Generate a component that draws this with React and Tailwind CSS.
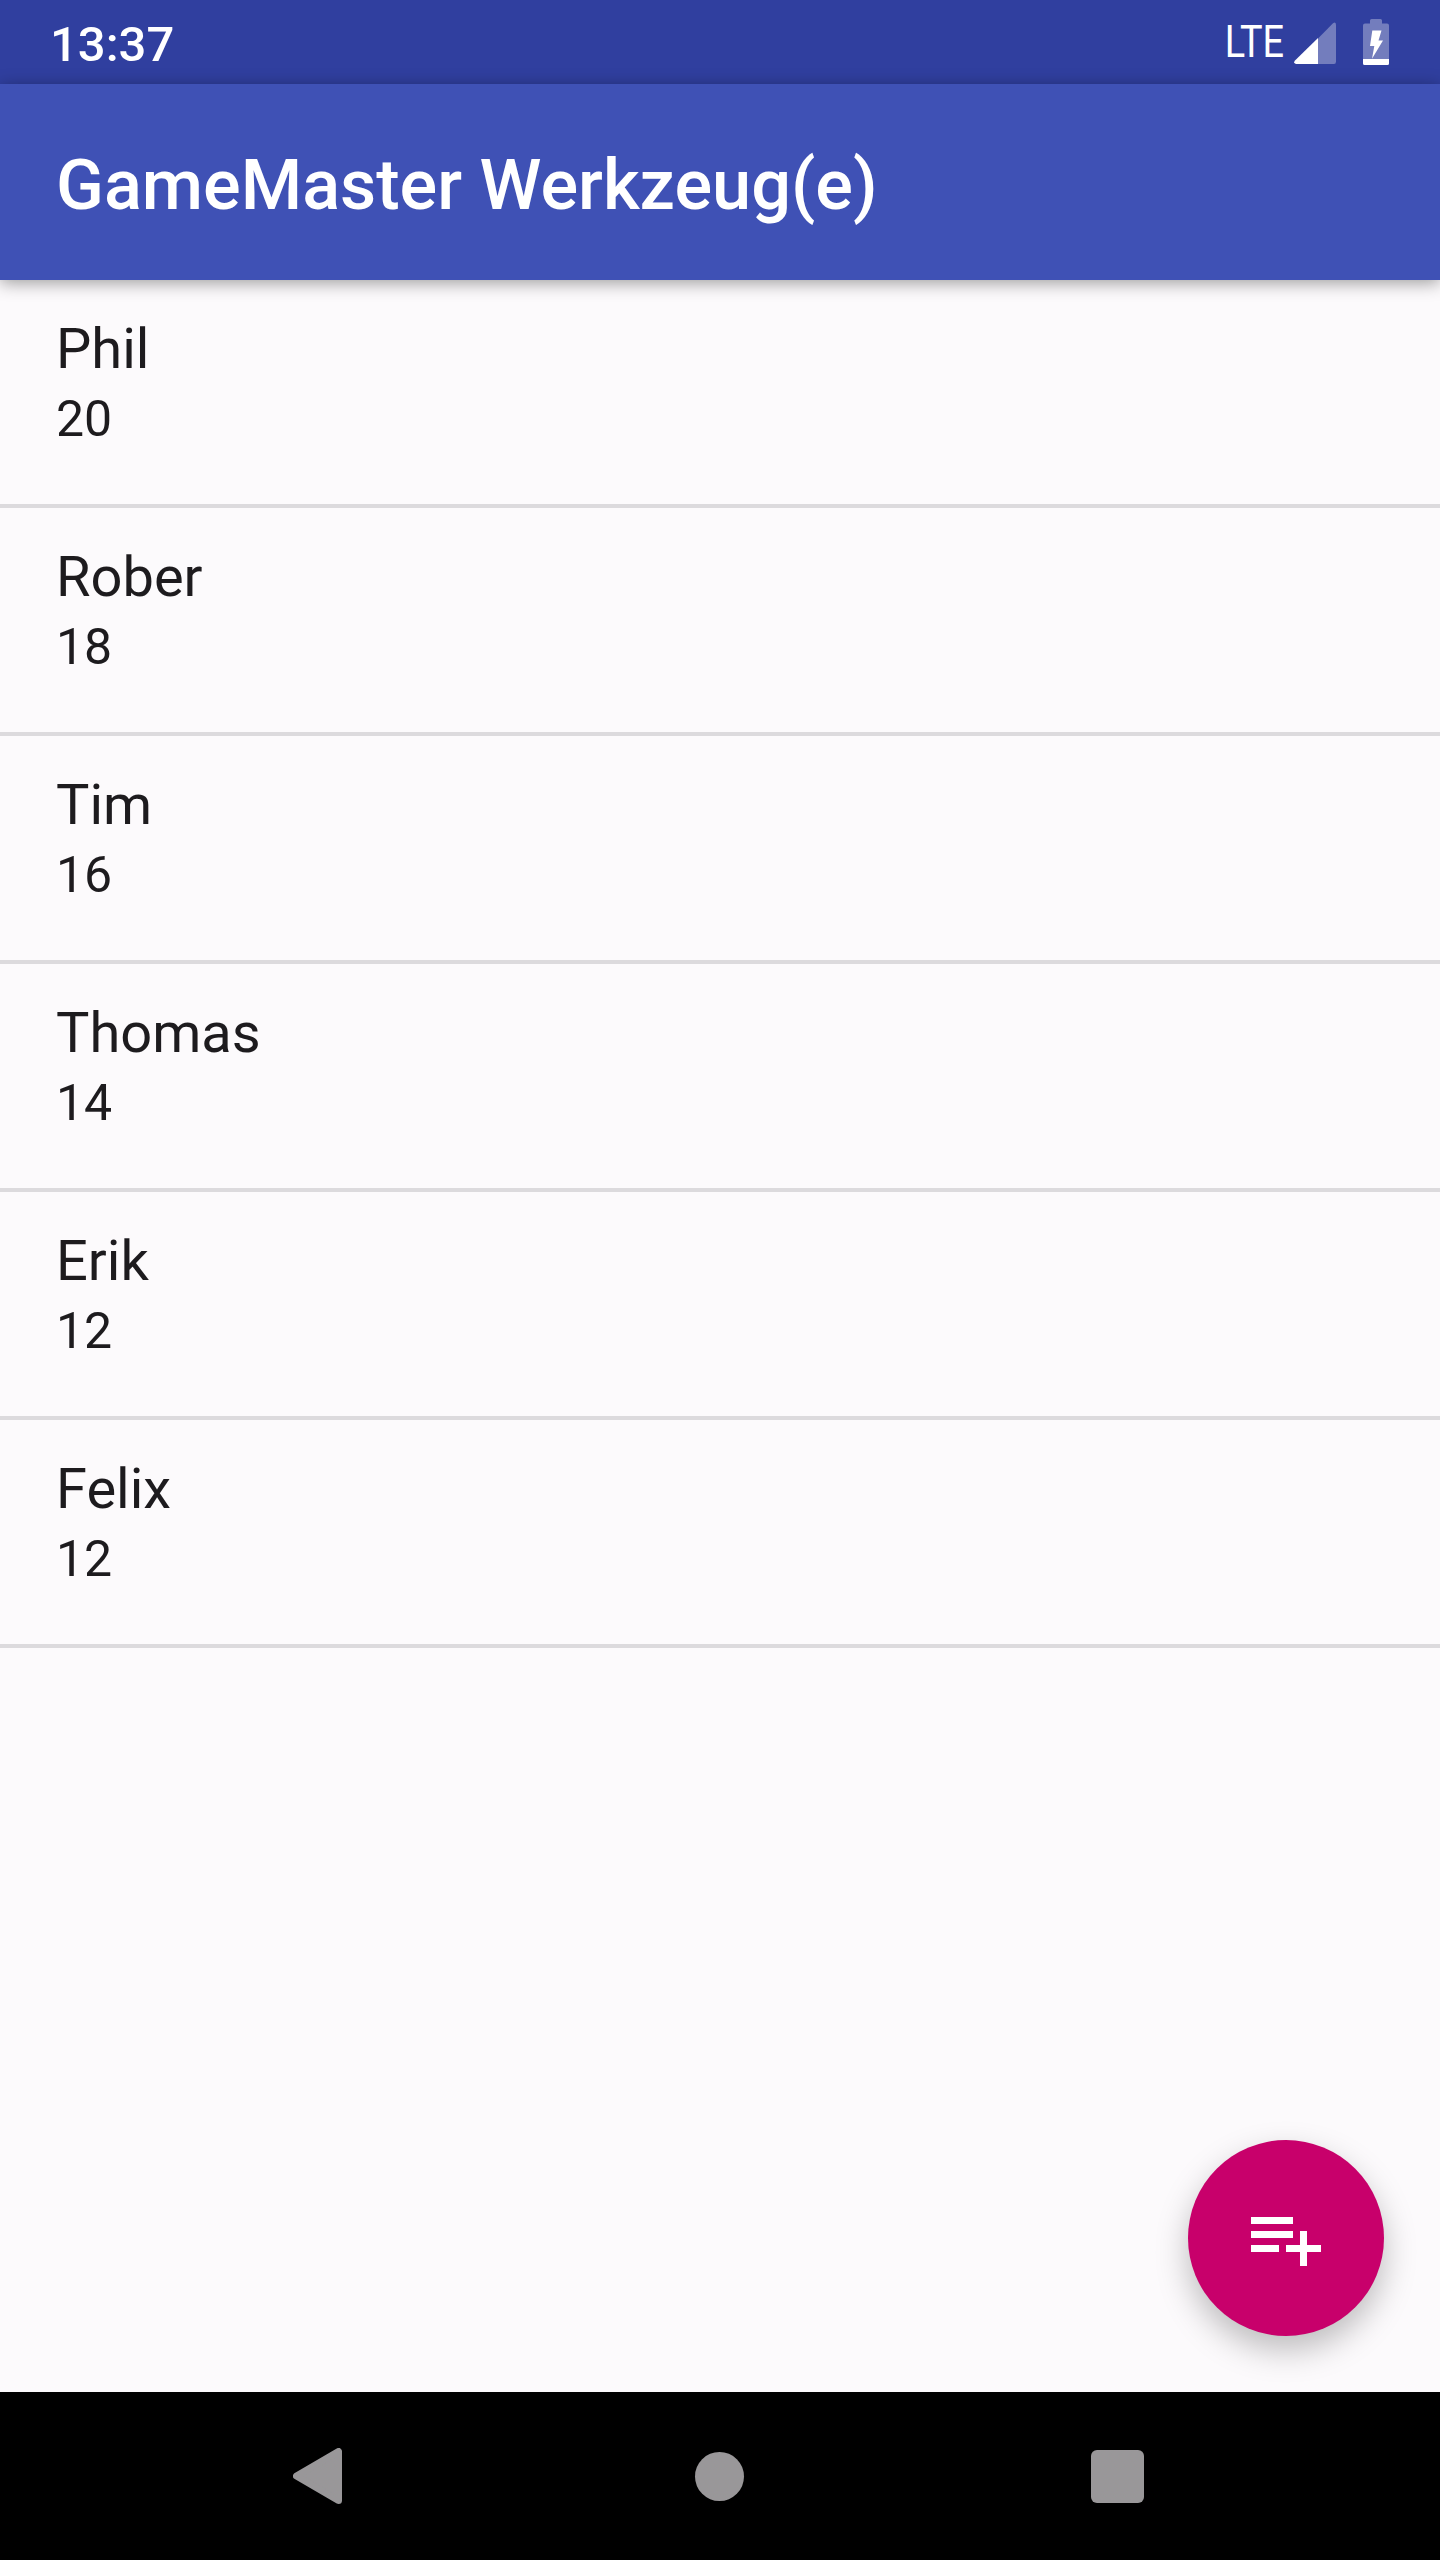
const people = [["Phil", "20"], ["Rober", "18"], ["Tim", "16"], ["Thomas", "14"], ["Erik", "12"], ["Felix", "12"]];

export default function App() {
  return (
    <div className="relative flex h-[2560px] w-[1440px] flex-col overflow-hidden bg-[#fcfafc] font-['Roboto',sans-serif]">
      <header className="flex h-[84px] shrink-0 items-center justify-between bg-[#303f9f] pl-[50px] pr-[51px] text-white">
        <span className="pt-[5px] text-[49px] font-medium leading-[79px]">13:37</span>
        <div className="flex items-start">
          <span className="origin-right scale-x-[0.86] text-[44px] leading-[84px]">LTE</span>
          <svg className="ml-[10px] mt-[22px] h-[42px] w-[42px]" viewBox="0 0 42 42">
            <path d="M39 1.2Q42-1 42 3V39.500Q42 42 40 42H24V16.500Z" fill="#737dbd" />
            <path d="M24 16V42H2Q-1 41 1 38.500Z" fill="#fff" />
          </svg>
          <svg className="ml-[27px] mt-[19px] h-[46px] w-[26px]" viewBox="0 0 26 46">
            <path d="M7 1.500Q7 0 8.500 0H17.500Q19 0 19 1.500V4.500H24Q26 4.500 26 6.500V40H0V6.500Q0 4.500 2 4.500H7Z" fill="#737dbd" />
            <path d="M0 40H26V44.500Q26 46 24.500 46H1.500Q0 46 0 44.500ZM9.300 11.500H18.500L15.500 21.500H20L9 39.800L11.300 27H7Z" fill="#fff" />
          </svg>
        </div>
      </header>
      <div className="z-10 flex h-[196px] shrink-0 items-center bg-[#3f51b5] pl-14 pt-[8px] text-[70.3px] font-medium text-white shadow-[0_3px_16px_rgba(0,0,0,0.38)]">GameMaster Werkzeug(e)</div>
      <main className="flex-1">
        {people.map(([name, value]) => (
          <div key={name} className="h-[228px] border-b-4 border-[#dcdadd] pl-14 pt-[34px] text-[#1d1b1e]">
            <div className="text-[56px] leading-[70px]">{name}</div>
            <div className="text-[50px] leading-[70px]">{value}</div>
          </div>
        ))}
      </main>
      <button className="absolute bottom-[224px] right-14 flex h-[196px] w-[196px] items-center justify-center rounded-full bg-[#c8006b] shadow-[0_14px_32px_rgba(0,0,0,0.25)]">
        <svg className="h-[84px] w-[84px]" viewBox="0 0 24 24" fill="#fff"><path d="M14 10H2v2h12v-2zm0-4H2v2h12V6zm4 8v-4h-2v4h-4v2h4v4h2v-4h4v-2h-4zM2 16h8v-2H2v2z" /></svg>
      </button>
      <nav className="z-10 flex h-[168px] shrink-0 items-center bg-black pl-[293px]">
        <svg className="h-[56px] w-[49px]" viewBox="0 0 49 56"><path d="M45.500 3.500V52.500L3.500 28Z" fill="#999799" stroke="#999799" strokeWidth="7" strokeLinejoin="round" /></svg>
        <span className="ml-[353px] h-[49px] w-[49px] rounded-full bg-[#999799]" />
        <span className="ml-[347px] h-[53px] w-[53px] rounded-[6px] bg-[#999799]" />
      </nav>
    </div>
  );
}
